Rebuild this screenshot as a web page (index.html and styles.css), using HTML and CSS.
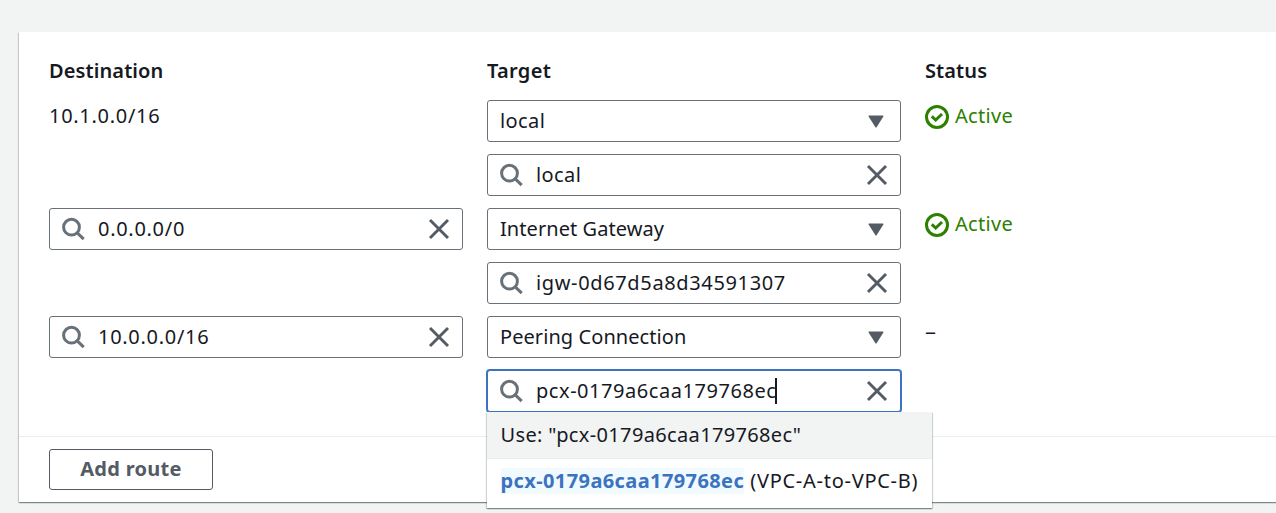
FILE: index.html
```
<!DOCTYPE html>
<html lang="en">
<head>
<meta charset="utf-8">
<title>Edit routes</title>
<link rel="stylesheet" href="styles.css">
</head>
<body>
<svg class="defs" width="0" height="0" aria-hidden="true">
  <symbol id="search" viewBox="0 0 24 24"><circle cx="9.5" cy="10.2" r="7.9" fill="none" stroke="currentColor" stroke-width="3"/><path d="M15 15.7L21.7 22.2" stroke="currentColor" stroke-width="3"/></symbol>
  <symbol id="close" viewBox="0 0 22 22"><path d="M2 2L20 20M20 2L2 20" stroke="currentColor" stroke-width="2.9"/></symbol>
  <symbol id="caret" viewBox="0 0 16 13"><path d="M1.2 1.2H14.8L8 11.8Z" fill="currentColor" stroke="currentColor" stroke-width="1.4" stroke-linejoin="round"/></symbol>
  <symbol id="check" viewBox="0 0 24 24"><circle cx="12" cy="12" r="10.5" fill="none" stroke="currentColor" stroke-width="3"/><path d="M6.8 11.4L10.7 15L17 9" fill="none" stroke="currentColor" stroke-width="3"/></symbol>
</svg>
<main class="panel">
  <div class="routes">
    <h3 class="heading h-dest">Destination</h3>
    <h3 class="heading h-target">Target</h3>
    <h3 class="heading h-status">Status</h3>

    <div class="value"><span class="cidr">10.1.0.0/16</span></div>
    <div class="stack">
      <div class="field select"><span class="t-local">local</span><svg class="caret"><use href="#caret"/></svg></div>
      <div class="field"><svg class="search"><use href="#search"/></svg><span class="t-local">local</span><svg class="close"><use href="#close"/></svg></div>
    </div>
    <div class="status"><svg class="check"><use href="#check"/></svg><span class="t-active">Active</span></div>

    <div class="field"><svg class="search"><use href="#search"/></svg><span class="cidr">0.0.0.0/0</span><svg class="close"><use href="#close"/></svg></div>
    <div class="stack">
      <div class="field select"><span class="t-gateway">Internet Gateway</span><svg class="caret"><use href="#caret"/></svg></div>
      <div class="field"><svg class="search"><use href="#search"/></svg><span class="t-igw">igw-0d67d5a8d34591307</span><svg class="close"><use href="#close"/></svg></div>
    </div>
    <div class="status"><svg class="check"><use href="#check"/></svg><span class="t-active">Active</span></div>

    <div class="field"><svg class="search"><use href="#search"/></svg><span class="cidr">10.0.0.0/16</span><svg class="close"><use href="#close"/></svg></div>
    <div class="stack">
      <div class="field select"><span class="t-gateway">Peering Connection</span><svg class="caret"><use href="#caret"/></svg></div>
      <div class="field focused"><svg class="search"><use href="#search"/></svg><span class="t-pcx">pcx-0179a6caa179768ec</span><i class="cursor"></i><svg class="close"><use href="#close"/></svg>
        <div class="menu">
          <div class="option highlighted"><span class="t-use">Use: "pcx-0179a6caa179768ec"</span></div>
          <div class="option"><mark class="match">pcx-0179a6caa179768ec</mark><span class="t-vpc">(VPC-A-to-VPC-B)</span></div>
        </div>
      </div>
    </div>
    <div class="status none"><span class="dash">–</span></div>
  </div>
  <div class="footer"><button class="add" type="button">Add route</button></div>
</main>
</body>
</html>
```
FILE: styles.css
```
* { box-sizing: border-box; }
body {
  margin: 0;
  height: 513px;
  overflow: hidden;
  padding: 32px 0 0 19px;
  background: #f2f3f3;
  color: #16191f;
  font: 20px/30px "Noto Sans", sans-serif;
  white-space: nowrap;
}
.defs { position: absolute; }
svg { flex: none; display: block; }
.panel {
  width: 1300px;
  height: 470px;
  background: #fff;
  box-shadow: 0 1px 1px 0 rgba(0, 28, 36, .3), 1px 1px 1px 0 rgba(0, 28, 36, .15), -1px 1px 1px 0 rgba(0, 28, 36, .15);
}
.routes {
  display: grid;
  grid-template-columns: 414px 414px 1fr;
  grid-template-rows: 44px 96px 96px 96px;
  column-gap: 24px;
  row-gap: 12px;
  height: 405px;
  padding: 12px 30px 0;
  border-bottom: 1px solid #eaeded;
}
.heading { margin: 0; padding-top: 12px; font-size: 20px; font-weight: 600; letter-spacing: .1px; }
.h-target { letter-spacing: .3px; }
.stack { display: flex; flex-direction: column; gap: 12px; }
.field {
  position: relative;
  display: flex;
  align-items: center;
  height: 42px;
  padding: 0 12px;
  border: 1px solid #687078;
  border-radius: 3px;
  background: #fff;
}
.value { padding-top: 1px; }
.cidr { letter-spacing: .7px; }
.t-local { letter-spacing: .4px; }
.t-active { letter-spacing: .3px; }
.t-gateway { letter-spacing: .07px; }
.t-igw { letter-spacing: .64px; }
.t-pcx { letter-spacing: .55px; }
.t-use { letter-spacing: .35px; }
.t-vpc { letter-spacing: .73px; }
.search { width: 24px; height: 24px; margin-right: 12px; color: #687078; }
.close { width: 22px; height: 22px; margin-left: auto; color: #545b64; }
.caret { width: 16px; height: 13px; margin: 0 4px 0 auto; color: #545b64; }
.status { display: flex; align-items: flex-start; gap: 6px; padding-top: 1px; color: #2d8000; }
.check { width: 24px; height: 24px; margin-top: 4px; }
.none { color: #16191f; }
.dash { transform: scaleX(1.1); transform-origin: left; }
.focused { border-color: #3c73c0; box-shadow: 0 0 0 1px #3c73c0; }
.cursor { width: 2px; height: 26px; margin-left: -1px; background: #16191f; }
.menu {
  position: absolute;
  left: -1px;
  top: 41px;
  width: 445px;
  height: 96px;
  background: #fff;
  box-shadow: 0 1px 1px 0 rgba(0, 28, 36, .3), 1px 1px 1px 0 rgba(0, 28, 36, .15), -1px 1px 1px 0 rgba(0, 28, 36, .15);
}
.option { display: flex; align-items: center; gap: 6px; height: 43px; padding: 0 13.5px; }
.highlighted { height: 47px; border-bottom: 1px solid #eaeded; background: #f2f3f3; }
.match { background: #f1faff; color: #3c73c0; font-weight: 700; line-height: 26px; letter-spacing: .4px; }
.footer { padding: 12px 30px; }
.add {
  width: 164px;
  height: 41px;
  padding: 0 0 2px;
  border: 1px solid #545b64;
  border-radius: 3px;
  background: #fff;
  color: #545b64;
  font: 700 20px/30px "Noto Sans", sans-serif;
  letter-spacing: .3px;
}
```
